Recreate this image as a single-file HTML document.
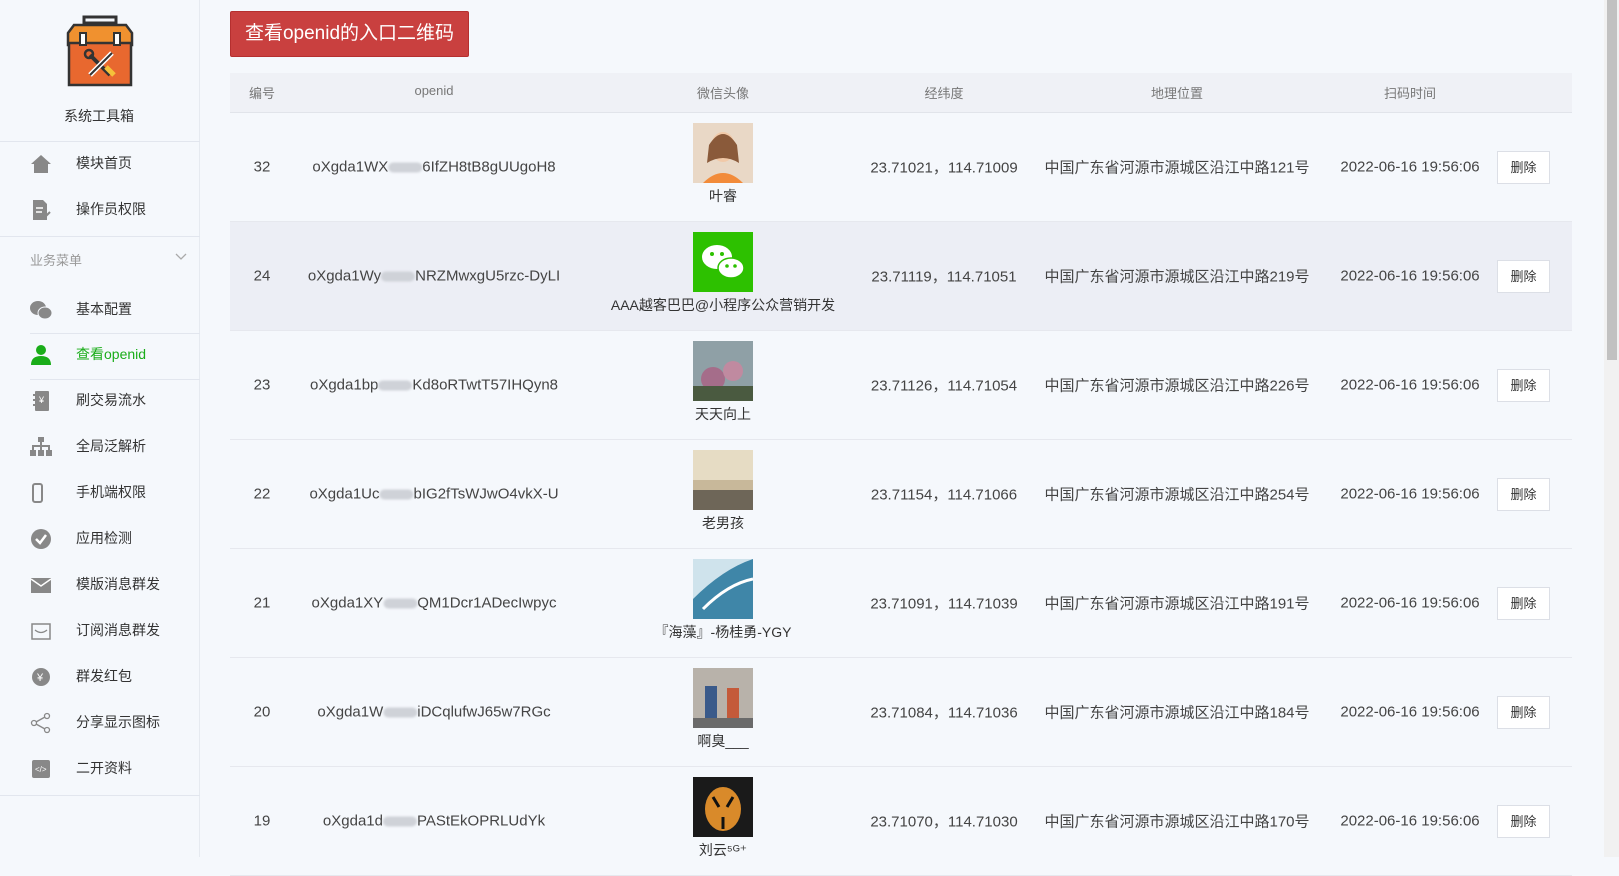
<!DOCTYPE html>
<html><head><meta charset="utf-8"><style>
*{margin:0;padding:0;box-sizing:border-box}
body{width:1619px;height:857px;overflow:hidden;background:#f5f8fc;font-family:"Liberation Sans","Noto Sans CJK SC",sans-serif;color:#333;position:relative}
.side{position:absolute;left:0;top:0;width:200px;height:857px;border-right:1px solid #e6eaf0}
.hr{position:absolute;left:0;width:200px;height:1px;background:#e2e6ee}
.mi{position:absolute;left:76px;font-size:14px;color:#333;line-height:20px}
.ic{position:absolute;left:30px;width:22px;height:22px}
.btn{position:absolute;left:230px;top:11px;width:239px;height:46px;background:#c9403f;border:1px solid #b52f2f;color:#fff;font-size:19px;line-height:44px;text-align:center;border-radius:2px}
.thead{position:absolute;left:230px;top:73px;width:1342px;height:40px;background:#eff1f6;border-bottom:1px solid #e1e4ea}
.th{position:absolute;top:10px;font-size:13px;color:#777;transform:translateX(-50%);white-space:nowrap}
.row{position:absolute;left:230px;width:1342px;height:109px;border-bottom:1px solid #e6e8ee}
.row.alt{background:#eceef5}
.c{position:absolute;top:50%;transform:translate(-50%,-50%);font-size:15px;color:#444;white-space:nowrap}
.av{position:absolute;left:463px;top:10px;width:60px;height:60px}
.nm{position:absolute;left:493px;top:73px;transform:translateX(-50%);font-size:14px;color:#333;white-space:nowrap}
.del{position:absolute;left:1267px;top:38px;width:53px;height:33px;border:1px solid #dcdfe6;background:#fff;font-size:13px;line-height:31px;text-align:center;color:#333}
.blur{display:inline-block;width:34px;height:10px;background:#cfd2d8;border-radius:5px;vertical-align:middle;filter:blur(1px)}
.sb{position:absolute;left:1604px;top:0;width:15px;height:857px;background:#f1f1f1}
.sb div{position:absolute;left:3px;top:0;width:10px;height:360px;background:#c1c1c1}
</style></head><body>
<div class="side">
<svg style="position:absolute;left:64px;top:15px" width="72" height="72" viewBox="0 0 72 72"><rect x="20" y="2" width="32" height="6" fill="none" stroke="#333" stroke-width="3"/><path d="M4 18 L10 10 H62 L68 18 V30 H4Z" fill="#f0912f" stroke="#333" stroke-width="2.5"/><rect x="5" y="28" width="62" height="42" fill="#e8682f" stroke="#333" stroke-width="2.5"/><rect x="16" y="18" width="6" height="12" fill="#fff" stroke="#333" stroke-width="2"/><rect x="50" y="18" width="6" height="12" fill="#fff" stroke="#333" stroke-width="2"/><path d="M26 40 L46 60" stroke="#333" stroke-width="4"/><circle cx="25" cy="39" r="4" fill="none" stroke="#333" stroke-width="2.5"/><path d="M48 38 L26 60" stroke="#fff" stroke-width="5"/><path d="M48 38 L26 60" stroke="#333" stroke-width="2" fill="none"/><path d="M42 52 L50 60" stroke="#f5c23a" stroke-width="5"/></svg>
<div class="mi" style="left:64px;top:106px">系统工具箱</div>
<div class="hr" style="top:141px"></div>
<svg class="ic" style="top:153px" viewBox="0 0 22 22"><path d="M1 11 L11 2 L21 11 H18 V20 H4 V11Z" fill="#888"/></svg>
<div class="mi" style="top:153px">模块首页</div>
<svg class="ic" style="top:199px" viewBox="0 0 22 22"><path d="M3 1 H13 L17 5 V21 H3Z" fill="#888"/><path d="M6 9H13M6 13H12" stroke="#fff" stroke-width="1.5"/><path d="M13 20 L20 13" stroke="#888" stroke-width="2"/></svg>
<div class="mi" style="top:199px">操作员权限</div>
<div class="hr" style="top:236px"></div>
<div class="mi" style="left:30px;top:251px;color:#999;font-size:13px">业务菜单</div>
<svg style="position:absolute;left:175px;top:253px" width="12" height="8"><path d="M1 1 L6 6 L11 1" fill="none" stroke="#aaa" stroke-width="1.3"/></svg>
<svg class="ic" style="top:299px" viewBox="0 0 22 22"><ellipse cx="8" cy="9" rx="8" ry="7" fill="#888"/><ellipse cx="15" cy="14" rx="7" ry="6" fill="#888" stroke="#f5f8fc" stroke-width="1"/></svg>
<div class="mi" style="top:299px">基本配置</div>
<div class="hr" style="top:333px;left:30px;width:170px"></div>
<svg class="ic" style="top:344px" viewBox="0 0 22 22"><circle cx="11" cy="6" r="5" fill="#1aad19"/><path d="M1 21 Q1 12 11 12 Q21 12 21 21Z" fill="#1aad19"/></svg>
<div class="mi" style="top:344px;color:#1aad19">查看openid</div>
<div class="hr" style="top:379px;left:30px;width:170px"></div>
<svg class="ic" style="top:390px" viewBox="0 0 22 22"><rect x="5" y="1" width="14" height="20" rx="1" fill="#888"/><path d="M3 5H7M3 10H7M3 15H7" stroke="#888" stroke-width="2"/><text x="9" y="13" font-size="9" fill="#fff" font-family="Liberation Sans">¥</text></svg>
<div class="mi" style="top:390px">刷交易流水</div>
<svg class="ic" style="top:436px" viewBox="0 0 22 22"><rect x="8" y="1" width="6" height="5" fill="#888"/><path d="M11 6V10M3 14V10H19V14M11 10V14" stroke="#888" stroke-width="2" fill="none"/><rect x="0" y="14" width="6" height="6" fill="#888"/><rect x="8" y="14" width="6" height="6" fill="#888"/><rect x="16" y="14" width="6" height="6" fill="#888"/></svg>
<div class="mi" style="top:436px">全局泛解析</div>
<svg class="ic" style="top:482px" viewBox="0 0 22 22"><rect x="3" y="2" width="9" height="18" rx="2" fill="none" stroke="#888" stroke-width="2"/></svg>
<div class="mi" style="top:482px">手机端权限</div>
<svg class="ic" style="top:528px" viewBox="0 0 22 22"><circle cx="11" cy="11" r="10" fill="#888"/><path d="M6 11 L10 15 L16 7" fill="none" stroke="#fff" stroke-width="2.5"/></svg>
<div class="mi" style="top:528px">应用检测</div>
<svg class="ic" style="top:574px" viewBox="0 0 22 22"><rect x="1" y="4" width="20" height="15" fill="#888"/><path d="M1 5 L11 12 L21 5" fill="none" stroke="#fff" stroke-width="1.5"/></svg>
<div class="mi" style="top:574px">模版消息群发</div>
<svg class="ic" style="top:620px" viewBox="0 0 22 22"><rect x="2" y="4" width="18" height="15" fill="none" stroke="#888" stroke-width="1.5"/><path d="M5 10 Q11 15 17 10" fill="none" stroke="#888" stroke-width="1.3"/></svg>
<div class="mi" style="top:620px">订阅消息群发</div>
<svg class="ic" style="top:666px" viewBox="0 0 22 22"><circle cx="11" cy="11" r="9" fill="#888"/><text x="7" y="15" font-size="11" fill="#fff" font-family="Liberation Sans">¥</text></svg>
<div class="mi" style="top:666px">群发红包</div>
<svg class="ic" style="top:712px" viewBox="0 0 22 22"><circle cx="17" cy="4" r="2.5" fill="none" stroke="#888" stroke-width="1.3"/><circle cx="4" cy="11" r="2.5" fill="none" stroke="#888" stroke-width="1.3"/><circle cx="17" cy="18" r="2.5" fill="none" stroke="#888" stroke-width="1.3"/><path d="M6 10 L15 5M6 12 L15 17" stroke="#888" stroke-width="1.3"/></svg>
<div class="mi" style="top:712px">分享显示图标</div>
<svg class="ic" style="top:758px" viewBox="0 0 22 22"><rect x="2" y="2" width="18" height="18" rx="2" fill="#888"/><text x="5" y="14" font-size="8" fill="#fff" font-family="Liberation Sans">&lt;/&gt;</text></svg>
<div class="mi" style="top:758px">二开资料</div>
<div class="hr" style="top:795px"></div>
</div>

<div class="btn">查看openid的入口二维码</div>
<div class="thead">
<span class="th" style="left:32px">编号</span><span class="th" style="left:204px">openid</span><span class="th" style="left:493px">微信头像</span><span class="th" style="left:714px">经纬度</span><span class="th" style="left:947px">地理位置</span><span class="th" style="left:1180px">扫码时间</span>
</div>

<div class="row" style="top:113px"><span class="c" style="left:32px">32</span><span class="c" style="left:204px">oXgda1WX<span class="blur"></span>6IfZH8tB8gUUgoH8</span><svg class="av" viewBox="0 0 60 60"><rect width="60" height="60" fill="#e9d8c6"/><ellipse cx="30" cy="24" rx="12" ry="15" fill="#f1c9a8"/><path d="M16 22 Q30 0 44 22 L46 40 Q30 30 14 40Z" fill="#8a5a3a"/><path d="M10 60 Q30 40 50 60Z" fill="#f28b3a"/></svg><span class="nm">叶睿</span><span class="c" style="left:714px">23.71021，114.71009</span><span class="c" style="left:947px">中国广东省河源市源城区沿江中路121号</span><span class="c" style="left:1180px">2022-06-16 19:56:06</span><div class="del">删除</div></div>

<div class="row alt" style="top:222px"><span class="c" style="left:32px">24</span><span class="c" style="left:204px">oXgda1Wy<span class="blur"></span>NRZMwxgU5rzc-DyLI</span><svg class="av" viewBox="0 0 60 60"><rect width="60" height="60" fill="#2dc100"/><ellipse cx="24" cy="25" rx="15" ry="12" fill="#fff"/><ellipse cx="38" cy="36" rx="13" ry="10" fill="#fff" stroke="#2dc100" stroke-width="1.5"/><circle cx="19" cy="22" r="2" fill="#2dc100"/><circle cx="29" cy="22" r="2" fill="#2dc100"/><circle cx="34" cy="34" r="1.8" fill="#2dc100"/><circle cx="42" cy="34" r="1.8" fill="#2dc100"/></svg><span class="nm">AAA越客巴巴@小程序公众营销开发</span><span class="c" style="left:714px">23.71119，114.71051</span><span class="c" style="left:947px">中国广东省河源市源城区沿江中路219号</span><span class="c" style="left:1180px">2022-06-16 19:56:06</span><div class="del">删除</div></div>

<div class="row" style="top:331px"><span class="c" style="left:32px">23</span><span class="c" style="left:204px">oXgda1bp<span class="blur"></span>Kd8oRTwtT57IHQyn8</span><svg class="av" viewBox="0 0 60 60"><rect width="60" height="60" fill="#8fa0a6"/><circle cx="20" cy="38" r="12" fill="#a56d8a"/><circle cx="40" cy="30" r="10" fill="#c08aa0"/><rect y="45" width="60" height="15" fill="#4a5a40"/></svg><span class="nm">天天向上</span><span class="c" style="left:714px">23.71126，114.71054</span><span class="c" style="left:947px">中国广东省河源市源城区沿江中路226号</span><span class="c" style="left:1180px">2022-06-16 19:56:06</span><div class="del">删除</div></div>

<div class="row" style="top:440px"><span class="c" style="left:32px">22</span><span class="c" style="left:204px">oXgda1Uc<span class="blur"></span>bIG2fTsWJwO4vkX-U</span><svg class="av" viewBox="0 0 60 60"><rect width="60" height="60" fill="#c8b89a"/><rect width="60" height="30" fill="#e6dcc4"/><rect y="40" width="60" height="20" fill="#6e6658"/></svg><span class="nm">老男孩</span><span class="c" style="left:714px">23.71154，114.71066</span><span class="c" style="left:947px">中国广东省河源市源城区沿江中路254号</span><span class="c" style="left:1180px">2022-06-16 19:56:06</span><div class="del">删除</div></div>

<div class="row" style="top:549px"><span class="c" style="left:32px">21</span><span class="c" style="left:204px">oXgda1XY<span class="blur"></span>QM1Dcr1ADecIwpyc</span><svg class="av" viewBox="0 0 60 60"><rect width="60" height="60" fill="#cfe3ec"/><path d="M0 40 Q30 10 60 0 V60 H0Z" fill="#3f86a8"/><path d="M10 50 Q35 25 60 20" stroke="#fff" stroke-width="3" fill="none"/></svg><span class="nm">『海藻』-杨桂勇-YGY</span><span class="c" style="left:714px">23.71091，114.71039</span><span class="c" style="left:947px">中国广东省河源市源城区沿江中路191号</span><span class="c" style="left:1180px">2022-06-16 19:56:06</span><div class="del">删除</div></div>

<div class="row" style="top:658px"><span class="c" style="left:32px">20</span><span class="c" style="left:204px">oXgda1W<span class="blur"></span>iDCqlufwJ65w7RGc</span><svg class="av" viewBox="0 0 60 60"><rect width="60" height="60" fill="#b8b2aa"/><rect x="12" y="18" width="12" height="34" fill="#3a5a8a"/><rect x="34" y="20" width="12" height="32" fill="#c45a3a"/><rect y="50" width="60" height="10" fill="#6a6a6a"/></svg><span class="nm">啊臭___</span><span class="c" style="left:714px">23.71084，114.71036</span><span class="c" style="left:947px">中国广东省河源市源城区沿江中路184号</span><span class="c" style="left:1180px">2022-06-16 19:56:06</span><div class="del">删除</div></div>

<div class="row" style="top:767px"><span class="c" style="left:32px">19</span><span class="c" style="left:204px">oXgda1d<span class="blur"></span>PAStEkOPRLUdYk</span><svg class="av" viewBox="0 0 60 60"><rect width="60" height="60" fill="#1a1a1a"/><ellipse cx="30" cy="32" rx="18" ry="22" fill="#d98a2a"/><path d="M20 20 L26 30 M40 20 L34 30 M30 40 V52" stroke="#111" stroke-width="3"/></svg><span class="nm">刘云⁵ᴳ⁺</span><span class="c" style="left:714px">23.71070，114.71030</span><span class="c" style="left:947px">中国广东省河源市源城区沿江中路170号</span><span class="c" style="left:1180px">2022-06-16 19:56:06</span><div class="del">删除</div></div>

<div class="sb"><div></div></div>
</body></html>
